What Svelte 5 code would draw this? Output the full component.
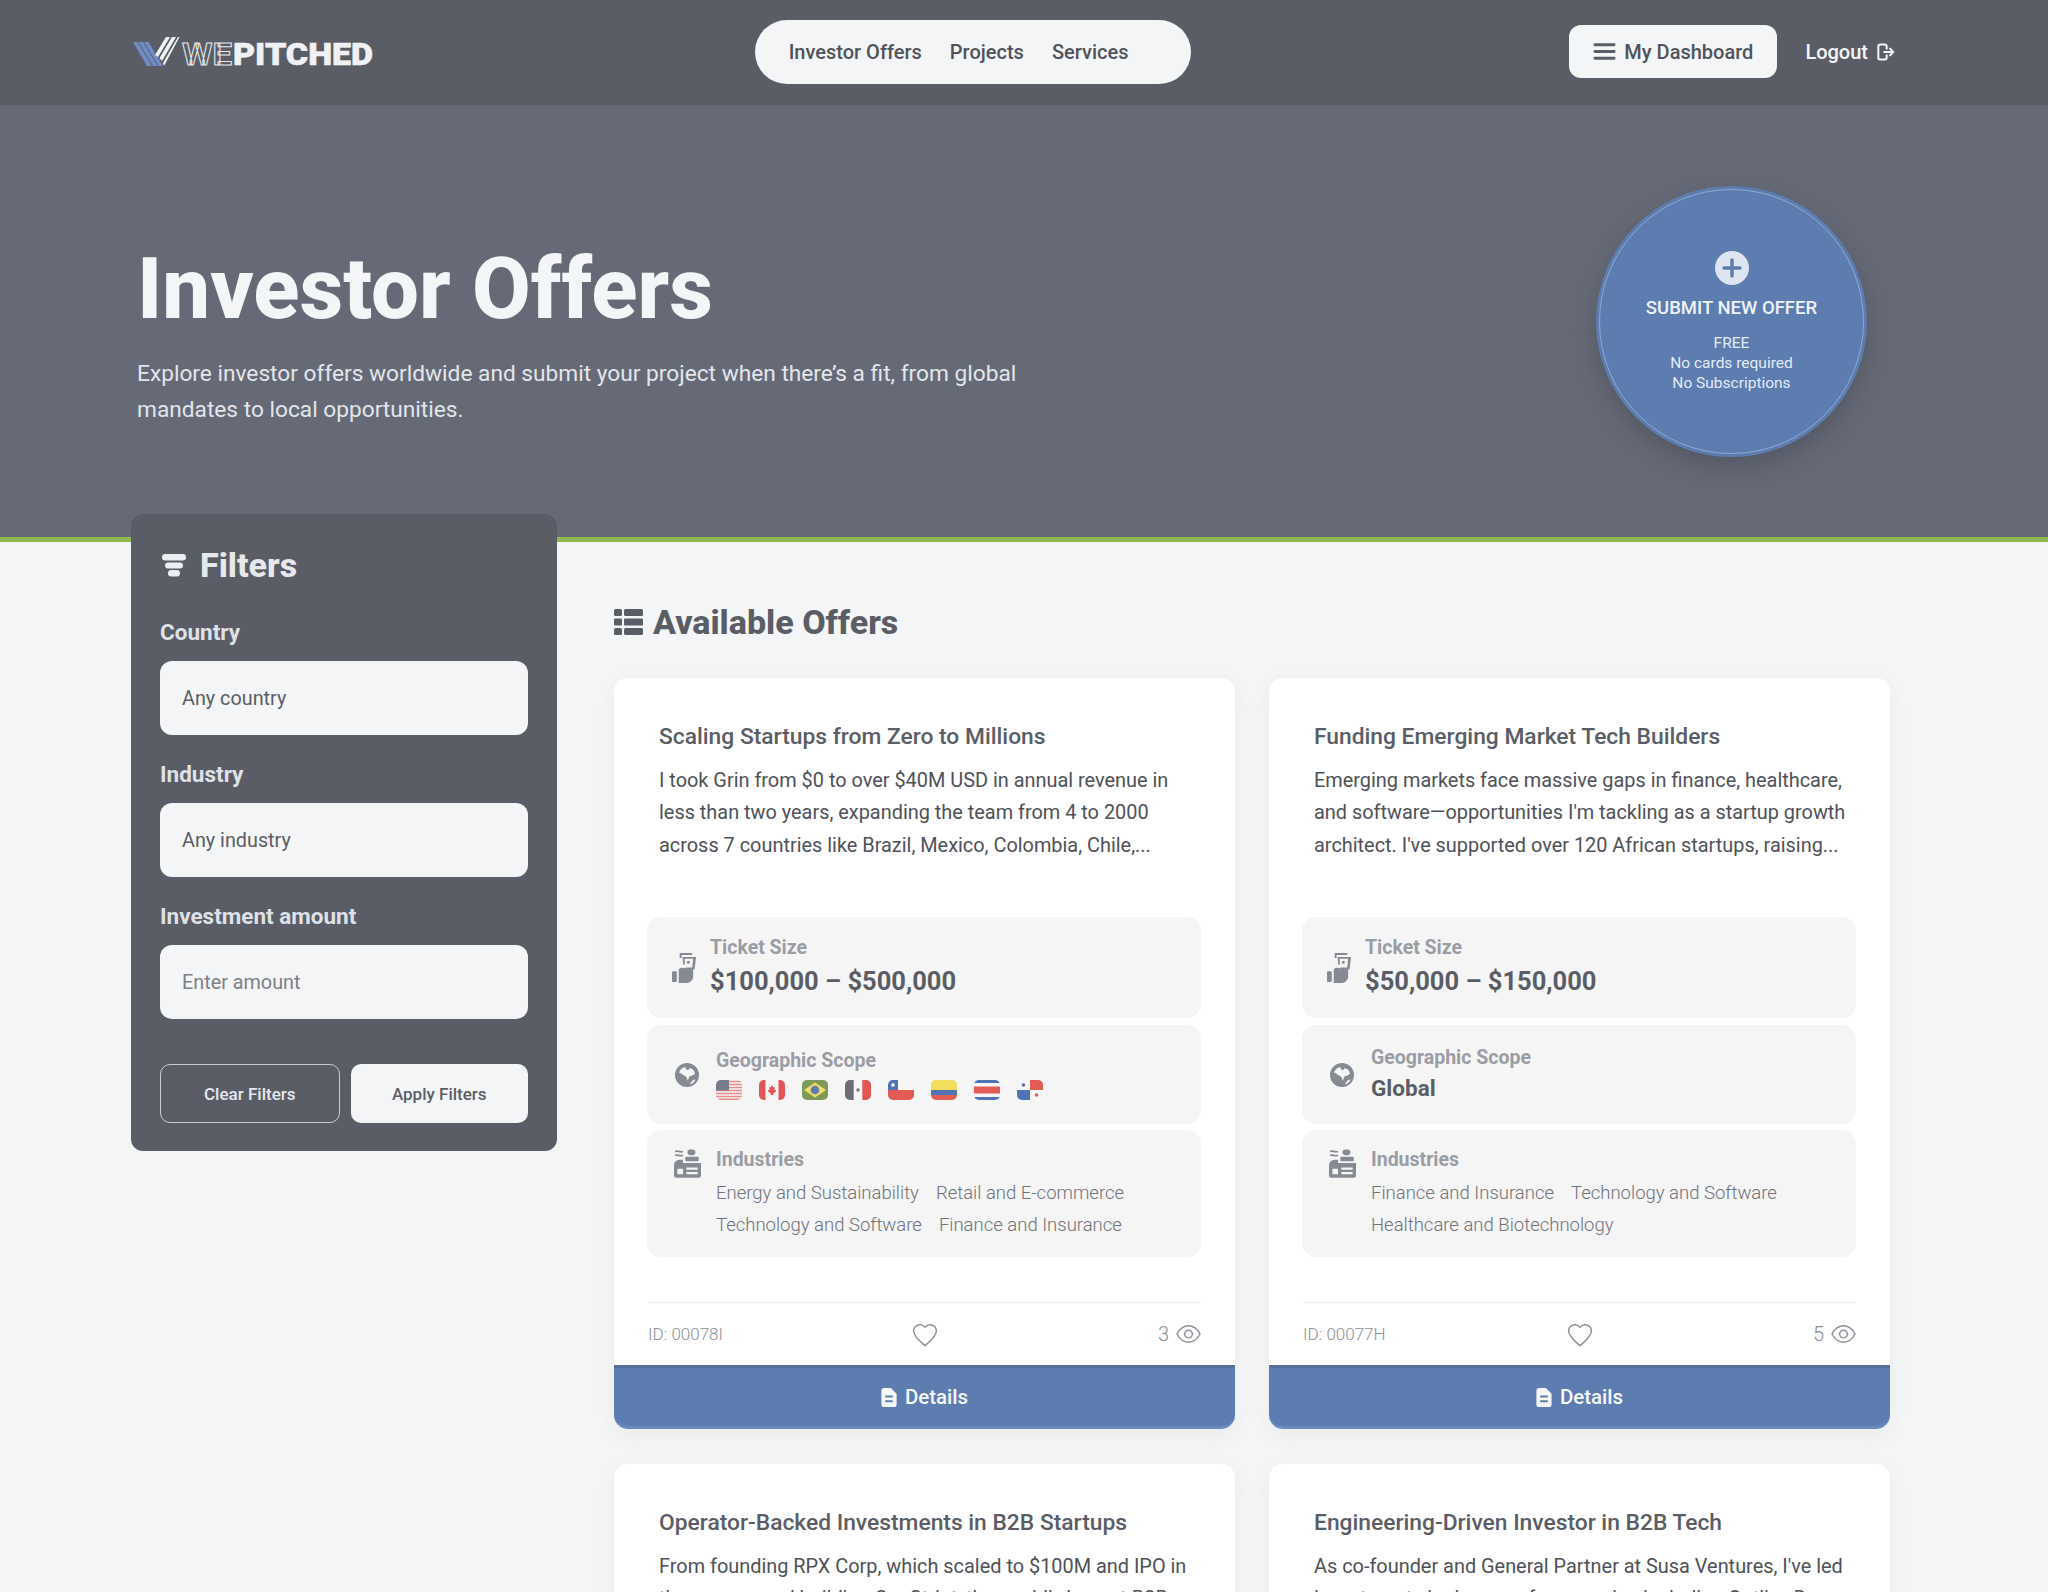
<script>
	const offers = [
		{
			title: 'Scaling Startups from Zero to Millions',
			text: 'I took Grin from $0 to over $40M USD in annual revenue in less than two years, expanding the team from 4 to 2000 across 7 countries like Brazil, Mexico, Colombia, Chile,...',
			ticket: '$100,000 – $500,000',
			flags: ['us', 'ca', 'br', 'mx', 'cl', 'co', 'cr', 'pa'],
			industries: ['Energy and Sustainability', 'Retail and E-commerce', 'Technology and Software', 'Finance and Insurance'],
			id: '00078I',
			views: 3
		},
		{
			title: 'Funding Emerging Market Tech Builders',
			text: "Emerging markets face massive gaps in finance, healthcare, and software—opportunities I'm tackling as a startup growth architect. I've supported over 120 African startups, raising...",
			ticket: '$50,000 – $150,000',
			flags: [],
			industries: ['Finance and Insurance', 'Technology and Software', 'Healthcare and Biotechnology'],
			id: '00077H',
			views: 5
		},
		{
			title: 'Operator-Backed Investments in B2B Startups',
			text: 'From founding RPX Corp, which scaled to $100M and IPO in three years and building ConStrint, the world’s largest B2B',
			ticket: '',
			flags: [],
			industries: [],
			id: '',
			views: 0
		},
		{
			title: 'Engineering-Driven Investor in B2B Tech',
			text: "As co-founder and General Partner at Susa Ventures, I've led investments in dozens of companies including Outlier, Day",
			ticket: '',
			flags: [],
			industries: [],
			id: '',
			views: 0
		}
	];
</script>

<div class="page">
	<header class="topbar">
		<svg class="logo" viewBox="0 0 240 32" width="240" height="32">
			<g fill="#6f8cc4">
				<path d="M0 6h4.500L19 30h-5z" />
				<path d="M5.500 6H10l14.500 24h-4.500z" />
				<path d="M11 6h4.500L30 30h-4.500z" />
			</g>
			<g fill="#f2f3f5">
				<path d="M22 19 33 1h4L25 21z" />
				<path d="M26.500 22 39 1h4L29 25z" />
				<path d="M30 27 45 1h2.500l-1 0L31 30z" />
			</g>
			<text x="49" y="29" class="logo-thin" textLength="50" lengthAdjust="spacingAndGlyphs">WE</text>
			<text x="100" y="29" class="logo-bold" textLength="140" lengthAdjust="spacingAndGlyphs">PITCHED</text>
		</svg>
		<nav class="pill">
			<a href="#offers">Investor Offers</a>
			<a href="#projects">Projects</a>
			<a href="#services">Services</a>
		</nav>
		<div class="account">
			<button class="dash">
				<svg viewBox="0 0 24 24" width="23" height="23"><path d="M2 5h20M2 12h20M2 19h20" stroke="#5a5d66" stroke-width="3" stroke-linecap="round" /></svg>
				My Dashboard
			</button>
			<a class="logout" href="#logout">
				Logout
				<svg viewBox="0 0 24 24" width="20" height="20" fill="none" stroke="#f4f5f6" stroke-width="2.400" stroke-linecap="round" stroke-linejoin="round"><path d="M14 8V5a2 2 0 0 0-2-2H6a2 2 0 0 0-2 2v14a2 2 0 0 0 2 2h6a2 2 0 0 0 2-2v-3" /><path d="M11 12h11M18 8l4 4-4 4" /></svg>
			</a>
		</div>
	</header>

	<section class="hero">
		<div class="hero-copy">
			<h1>Investor Offers</h1>
			<p>Explore investor offers worldwide and submit your project when there’s a fit, from global mandates to local opportunities.</p>
		</div>
		<div class="submit">
			<div class="submit-inner">
				<svg viewBox="0 0 34 34" width="34" height="34"><circle cx="17" cy="17" r="17" fill="#dde5f2" /><path d="M17 9v16M9 17h16" stroke="#5d7cb0" stroke-width="3.400" stroke-linecap="round" /></svg>
				<strong>SUBMIT NEW OFFER</strong>
				<span>FREE<br />No cards required<br />No Subscriptions</span>
			</div>
		</div>
	</section>

	<main class="content">
		<aside class="filters">
			<h3>
				<svg viewBox="0 0 24 24" width="24" height="24" fill="#eceef1"><rect x="0" y="1" width="24" height="6.500" rx="3.200" /><rect x="3" y="9.500" width="18" height="6" rx="3" /><rect x="6" y="17" width="12" height="6.500" rx="3.200" /></svg>
				Filters
			</h3>
			<label for="country">Country</label>
			<div class="field" id="country">Any country</div>
			<label for="industry">Industry</label>
			<div class="field" id="industry">Any industry</div>
			<label for="amount">Investment amount</label>
			<div class="field muted" id="amount">Enter amount</div>
			<div class="filter-actions">
				<button class="clear">Clear Filters</button>
				<button class="apply">Apply Filters</button>
			</div>
		</aside>

		<section class="offers">
			<h2>
				<svg viewBox="0 0 29 26" width="29" height="26" fill="#5a5d66"><rect y="0" width="8" height="7" rx="1.500" /><rect x="10" y="0" width="19" height="7" rx="1.500" /><rect y="9.500" width="8" height="7" rx="1" /><rect x="10" y="9.500" width="19" height="7" rx="1" /><rect y="19" width="8" height="7" rx="1.500" /><rect x="10" y="19" width="19" height="7" rx="1.500" /></svg>
				Available Offers
			</h2>
			<div class="grid">
				{#each offers as offer}
					<article class="card">
						<div class="card-head">
							<h4>{offer.title}</h4>
							<p>{offer.text}</p>
						</div>
						{#if offer.ticket}
							<div class="facts">
								<div class="fact ticket">
									<svg class="fact-icon" viewBox="0 0 26 32" width="25" height="33" fill="#868a93">
										<path d="M8 1h13v2H10v3H8z" />
										<path fill-rule="evenodd" d="M11 5h14l-1.500 13H21v-2l1-9H13l.6 6H11.600zM17 9a1.600 1.600 0 1 1 0 3.200A1.600 1.600 0 0 1 17 9z" />
										<rect x="0" y="20" width="5" height="11" rx="1" />
										<path d="M7 18c2-2 5-2 7-1v-1h8v9c0 4-3 7-7 7H7z" />
									</svg>
									<div>
										<div class="fact-label">Ticket Size</div>
										<div class="fact-value big">{offer.ticket}</div>
									</div>
								</div>
								<div class="fact geo">
									<svg class="fact-icon" viewBox="0 0 24 24" width="24" height="24" fill="#868a93">
										<path fill-rule="evenodd" d="M12 0a12 12 0 1 1 0 24 12 12 0 0 1 0-24zM4 9.500c2 .5 3 2 5 3 2 .5 3 2 3.500 5 1.500-1 1-3 2-4 1.500-1 4-1 5.500-3-.5-3-3-5-5-5.500-1 1-1 2-2.500 2C11 7 11 5 10 4 7.500 4.500 5 6.500 4 9.500zM15 21.500c2.500-.5 4.500-2.500 5.500-5-2.500 0-4.500 2-5.500 5z" />
									</svg>
									<div>
										<div class="fact-label">Geographic Scope</div>
										{#if offer.flags.length}
											<div class="flags">
												{#each offer.flags as flag}
													<svg viewBox="0 0 26 20" width="26" height="20" class="flag">
														{#if flag === 'us'}
															<rect width="26" height="20" fill="#f6f6f6" />
															<path d="M0 1.500h26M0 4.500h26M0 7.500h26M0 10.500h26M0 13.500h26M0 16.500h26M0 19.200h26" stroke="#e88a8a" stroke-width="1.500" />
															<rect width="13" height="10.500" fill="#777c88" />
														{:else if flag === 'ca'}
															<rect width="26" height="20" fill="#f6f6f6" />
															<rect width="6.500" height="20" fill="#e25555" />
															<rect x="19.500" width="6.500" height="20" fill="#e25555" />
															<path d="M13 5l1.400 2.600 1.600-.6-.6 3.400 1.800-.6-.5 2-2.400 1.400.2 1.800h-3l.2-1.800L9.300 11.800l-.5-2 1.800.6L10 7l1.600.6z" fill="#e25555" />
														{:else if flag === 'br'}
															<rect width="26" height="20" fill="#7f9a58" />
															<path d="M13 2.500 24 10 13 17.500 2 10z" fill="#f0dc6a" />
															<circle cx="13" cy="10" r="4.300" fill="#5d7cb0" />
														{:else if flag === 'mx'}
															<rect width="26" height="20" fill="#f6f6f6" />
															<rect width="8.700" height="20" fill="#6b6e75" />
															<rect x="17.300" width="8.700" height="20" fill="#e25555" />
															<circle cx="13" cy="10" r="1.700" fill="#777" />
														{:else if flag === 'cl'}
															<rect width="26" height="10" fill="#f6f6f6" />
															<rect y="10" width="26" height="10" fill="#e25c55" />
															<rect width="10" height="10" fill="#4f73b3" />
															<circle cx="5" cy="5" r="1.800" fill="#fff" />
														{:else if flag === 'co'}
															<rect width="26" height="10" fill="#f4dc5c" />
															<rect y="10" width="26" height="5" fill="#4f73b3" />
															<rect y="15" width="26" height="5" fill="#e25c55" />
														{:else if flag === 'cr'}
															<rect width="26" height="20" fill="#f6f6f6" />
															<rect width="26" height="3" fill="#4f73b3" />
															<rect y="17" width="26" height="3" fill="#4f73b3" />
															<rect y="6.500" width="26" height="7" fill="#e25c55" />
														{:else}
															<rect width="26" height="20" fill="#f6f6f6" />
															<rect x="13" width="13" height="10" fill="#e25c55" />
															<rect y="10" width="13" height="10" fill="#4f73b3" />
															<circle cx="6.500" cy="5" r="1.800" fill="#4f73b3" />
															<circle cx="19.500" cy="15" r="1.800" fill="#e25c55" />
														{/if}
													</svg>
												{/each}
											</div>
										{:else}
											<div class="fact-value">Global</div>
										{/if}
									</div>
								</div>
								<div class="fact inds">
									<svg class="fact-icon" viewBox="0 0 24 26" width="27" height="30" fill="#868a93">
										<path d="M1 2c2-1 4 1 7 0v1.500c-3 1-5-1-7 0zM1 5.500c2-1 4 1 7 0V7c-3 1-5-1-7 0z" />
										<rect x="12" y="1" width="7" height="5" rx="2.500" />
										<rect x="10" y="7.500" width="12" height="4" rx="1" />
										<path fill-rule="evenodd" d="M5 10h3v3h16v11a2 2 0 0 1-2 2H2a2 2 0 0 1-2-2V15a5 5 0 0 1 5-5zM3 18v5h5v-5zM11 17v2h10v-2zM11 21v2h10v-2z" />
									</svg>
									<div>
										<div class="fact-label">Industries</div>
										<div class="tags">
											{#each offer.industries as tag}
												<span>{tag}</span>
											{/each}
										</div>
									</div>
								</div>
							</div>
							<div class="meta">
								<span class="offer-id">ID: {offer.id}</span>
								<svg class="heart" viewBox="0 0 24 24" width="26" height="26" fill="none" stroke="#8c8f96" stroke-width="1.300"><path d="M12 22C8 18 1.500 13.500 1.500 8A5.800 5.800 0 0 1 12 5a5.800 5.800 0 0 1 10.500 3c0 5.500-6.500 10-10.500 14z" /></svg>
								<span class="views">
									{offer.views}
									<svg viewBox="0 0 26 20" width="25" height="20" fill="none" stroke="#8c8f96" stroke-width="1.500"><path d="M1 10c3-5.500 7-8.500 12-8.500S22 4.500 25 10c-3 5.500-7 8.500-12 8.500S4 15.500 1 10z" /><circle cx="13" cy="10" r="4" /></svg>
								</span>
							</div>
							<button class="details">
								<svg viewBox="0 0 16 20" width="16" height="19" fill="#f6f7f9"><path fill-rule="evenodd" d="M3 0h7l6 6v11a3 3 0 0 1-3 3H3a3 3 0 0 1-3-3V3a3 3 0 0 1 3-3zM4 8v2h8V8zM4 13v2h8v-2z" /></svg>
								Details
							</button>
						{/if}
					</article>
				{/each}
			</div>
		</section>
	</main>
</div>

<style>
	:global(body) {
		background: #f4f5f6;
		font-family: Roboto, 'Liberation Sans', sans-serif;
	}

	.page {
		height: 1592px;
		overflow: hidden;
	}

	.topbar {
		height: 105px;
		box-sizing: border-box;
		padding: 0 153px 2px 133px;
		background: #5a5d66;
		display: flex;
		justify-content: space-between;
		align-items: center;
	}

	.logo {
		overflow: visible;
		margin-right: 3px;
	}

	.logo-thin {
		font: 700 32px Roboto, sans-serif;
		fill: none;
		stroke: #e6e8ec;
		stroke-width: 1;
	}

	.logo-bold {
		font: 900 32px Roboto, sans-serif;
		fill: #f0f1f4;
		stroke: #f0f1f4;
		stroke-width: 0.6;
	}

	.pill {
		width: 436px;
		height: 64px;
		box-sizing: border-box;
		padding: 0 34px;
		background: #f4f5f6;
		border-radius: 32px;
		display: flex;
		align-items: center;
		gap: 28px;
	}

	.pill a {
		color: #50535b;
		font-size: 20px;
		font-weight: 500;
		text-decoration: none;
	}

	.account {
		display: flex;
		align-items: center;
		gap: 28px;
	}

	.dash {
		width: 208px;
		height: 53px;
		border: 0;
		border-radius: 12px;
		background: #f4f5f6;
		color: #50535b;
		font: 500 20px Roboto, sans-serif;
		display: flex;
		align-items: center;
		justify-content: center;
		gap: 8px;
	}

	.logout {
		color: #f4f5f6;
		font-size: 20px;
		font-weight: 500;
		text-decoration: none;
		display: flex;
		align-items: center;
		gap: 7px;
	}

	.hero {
		height: 432px;
		box-sizing: border-box;
		padding: 81px 181px 0 137px;
		background: #666a77;
		display: flex;
		justify-content: space-between;
		align-items: flex-start;
	}

	.hero-copy {
		width: 900px;
		padding-top: 52px;
	}

	h1 {
		margin: 0;
		color: #f4f5f6;
		font-size: 85.200px;
		font-weight: 800;
		line-height: 103px;
	}

	.hero-copy p {
		margin: 15px 0 0;
		color: #e3e5ea;
		font-size: 22.700px;
		line-height: 36px;
	}

	.submit {
		width: 271px;
		height: 271px;
		box-sizing: border-box;
		padding: 3px;
		border-radius: 50%;
		background: #5d7cb0;
		box-shadow: 0 10px 24px rgba(50, 54, 66, 0.35);
	}

	.submit-inner {
		height: 100%;
		box-sizing: border-box;
		border: 1px solid #8fa9d2;
		border-radius: 50%;
		color: #e4ebf6;
		display: flex;
		flex-direction: column;
		align-items: center;
		padding-top: 61px;
		text-align: center;
	}

	.submit-inner strong {
		margin-top: 12px;
		color: #eef2f9;
		font-size: 18.500px;
		font-weight: 500;
	}

	.submit-inner span {
		margin-top: 14px;
		font-size: 15.500px;
		line-height: 20px;
	}

	.content {
		border-top: 5px solid #8db84f;
		padding: 0 154px 0 131px;
		display: flex;
		gap: 57px;
		align-items: flex-start;
	}

	.filters {
		width: 426px;
		box-sizing: border-box;
		margin-top: -28px;
		padding: 31px 29px 28px;
		background: #5a5d66;
		border-radius: 12px;
		color: #e6e8ec;
	}

	.filters h3 {
		margin: 0 0 34px;
		font-size: 34px;
		font-weight: 800;
		line-height: 40px;
		display: flex;
		align-items: center;
		gap: 14px;
		padding-left: 2px;
	}

	.filters label {
		display: block;
		margin-bottom: 16px;
		font-size: 22.500px;
		font-weight: 700;
		line-height: 26px;
		color: #dfe1e6;
	}

	.field {
		height: 74px;
		box-sizing: border-box;
		margin-bottom: 26px;
		padding: 0 22px;
		background: #f4f5f6;
		border-radius: 12px;
		color: #5a5d66;
		font-size: 19.800px;
		display: flex;
		align-items: center;
	}

	.field.muted {
		color: #7d8087;
	}

	.filter-actions {
		margin-top: 45px;
		display: flex;
		gap: 11px;
	}

	.filter-actions button {
		height: 59px;
		flex: 1;
		border-radius: 10px;
		font: 500 17px Roboto, sans-serif;
	}

	.clear {
		background: transparent;
		border: 1px solid #c9ccd3;
		color: #e6e8ec;
	}

	.apply {
		background: #f4f5f6;
		border: 0;
		color: #5a5d66;
	}

	.offers {
		flex: 1;
	}

	h2 {
		margin: 59px 0 35px;
		color: #5a5d66;
		font-size: 34px;
		font-weight: 800;
		line-height: 42px;
		display: flex;
		align-items: center;
		gap: 10px;
	}

	.grid {
		display: grid;
		grid-template-columns: 621px 621px;
		gap: 35px 34px;
	}

	.card {
		background: #fff;
		border-radius: 14px;
		box-shadow: 0 6px 20px rgba(60, 64, 80, 0.06);
	}

	.card-head {
		padding: 45px 40px 0 45px;
		height: 239px;
		box-sizing: border-box;
	}

	h4 {
		margin: 0 0 14px;
		color: #5a5d66;
		font-size: 22.800px;
		font-weight: 500;
		line-height: 28px;
	}

	.card-head p {
		margin: 0;
		color: #4e5158;
		font-size: 19.900px;
		line-height: 32.300px;
	}

	.facts {
		margin: 0 34px 0 33px;
		display: flex;
		flex-direction: column;
		gap: 7px;
	}

	.fact {
		background: #f5f5f6;
		border-radius: 14px;
		display: flex;
		align-items: center;
	}

	.fact-icon {
		flex-shrink: 0;
	}

	.ticket {
		height: 101px;
		padding: 0 25px;
		gap: 13px;
	}

	.geo {
		height: 99px;
		padding: 0 28px;
		gap: 17px;
	}

	.inds {
		height: 127px;
		margin-top: -1px;
		align-items: flex-start;
		padding: 18px 27px 0;
		gap: 15px;
		box-sizing: border-box;
	}

	.fact-label {
		color: #9a9da4;
		font-size: 19.500px;
		font-weight: 700;
		line-height: 24px;
	}

	.fact-value {
		color: #5a5d66;
		font-size: 22.500px;
		font-weight: 700;
		line-height: 30px;
		margin-top: 3px;
	}

	.fact-value.big {
		font-size: 25.500px;
		line-height: 36px;
	}

	.flags {
		margin-top: 7px;
		display: flex;
		gap: 17px;
	}

	.flag {
		border-radius: 5px;
		display: block;
	}

	.tags {
		margin-top: 5px;
		display: flex;
		flex-wrap: wrap;
		gap: 0 17px;
		color: #6f7279;
		font-size: 18.500px;
		font-weight: 300;
		line-height: 32px;
	}

	.meta {
		margin: 45px 34px 0 34px;
		height: 63px;
		box-sizing: border-box;
		border-top: 1px solid #eceded;
		display: grid;
		grid-template-columns: 1fr auto 1fr;
		align-items: center;
		color: #8c8f96;
	}

	.offer-id {
		font-size: 17px;
		font-weight: 300;
	}

	.heart {
		margin-top: 2px;
	}

	.views {
		justify-self: end;
		font-size: 20px;
		font-weight: 300;
		display: flex;
		align-items: center;
		gap: 7px;
	}

	.details {
		width: 100%;
		height: 64px;
		border: 0;
		border-top: 3px solid #527098;
		border-bottom: 3px solid #6b8bc0;
		border-radius: 0 0 14px 14px;
		background: #5d7cb0;
		color: #f6f7f9;
		font: 500 20.500px Roboto, sans-serif;
		display: flex;
		align-items: center;
		justify-content: center;
		gap: 8px;
	}
</style>
